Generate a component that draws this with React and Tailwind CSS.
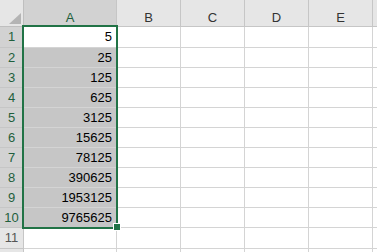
const columns = [
  { name: 'A', width: 'w-[93px]', selected: true },
  { name: 'B', width: 'w-[64px]' },
  { name: 'C', width: 'w-[64px]' },
  { name: 'D', width: 'w-[64px]' },
  { name: 'E', width: 'w-[64px]' },
];

// powers of five, one per row in column A
const values = [5, 25, 125, 625, 3125, 15625, 78125, 390625, 1953125, 9765625];

const rows = Array.from({ length: 12 }, (_, i) => ({
  n: i + 1,
  value: values[i],
  selected: i < 10,
  active: i === 0,
  height: i === 0 || i === 10 ? 'h-[21px]' : 'h-[20px]',
}));

function Corner() {
  return (
    <div className="w-[24px] h-full shrink-0 bg-[#e6e6e6] border-r border-b border-[#bfbfbf] flex items-end justify-end pr-[2px] pb-[2px]">
      <svg width="12" height="11" viewBox="0 0 12 11">
        <polygon points="12,0 12,11 0,11" fill="#b4b4b4" />
      </svg>
    </div>
  );
}

export default function App() {
  return (
    <div className="relative w-[377px] h-[252px] overflow-hidden bg-white font-['Liberation_Sans',Arial,sans-serif] text-[13px] text-black">
      {/* column headers */}
      <div className="flex h-[27px]">
        <Corner />
        {columns.map(c => (
          <div
            key={c.name}
            className={`${c.width} shrink-0 h-full border-r border-b border-[#c6c6c6] text-center pt-[10px] leading-[15px] ${
              c.selected ? 'bg-[#d2d2d2] text-[#1f5f3c]' : 'bg-[#e6e6e6] text-[#333333]'
            }`}
          >
            {c.name}
          </div>
        ))}
        <div className="flex-1 h-full bg-[#e6e6e6] border-b border-[#c6c6c6]" />
      </div>

      {/* grid rows */}
      {rows.map(r => (
        <div key={r.n} className={`flex ${r.height}`}>
          <div
            className={`w-[24px] shrink-0 h-full border-r border-b border-[#c6c6c6] flex items-center justify-center ${
              r.selected ? 'bg-[#d2d2d2] text-[#1f5f3c]' : 'bg-[#e6e6e6] text-[#555555]'
            }`}
          >
            {r.n < 12 ? r.n : null}
          </div>
          {columns.map((c, ci) => (
            <div
              key={c.name}
              className={`${c.width} shrink-0 h-full border-r border-b border-[#d4d4d4] flex items-center justify-end pr-[4px] ${
                ci === 0 && r.selected && !r.active ? 'bg-[#c6c6c6]' : 'bg-white'
              }`}
            >
              {ci === 0 ? r.value : null}
            </div>
          ))}
          <div className="flex-1 h-full border-b border-[#d4d4d4]" />
        </div>
      ))}

      {/* selection outline and fill handle */}
      <div className="absolute left-[22px] top-[25px] w-[96px] h-[204px] border-2 border-[#217346] pointer-events-none" />
      <div className="absolute left-[113px] top-[223px] w-[8px] h-[8px] bg-[#217346] border border-white" />
    </div>
  );
}
